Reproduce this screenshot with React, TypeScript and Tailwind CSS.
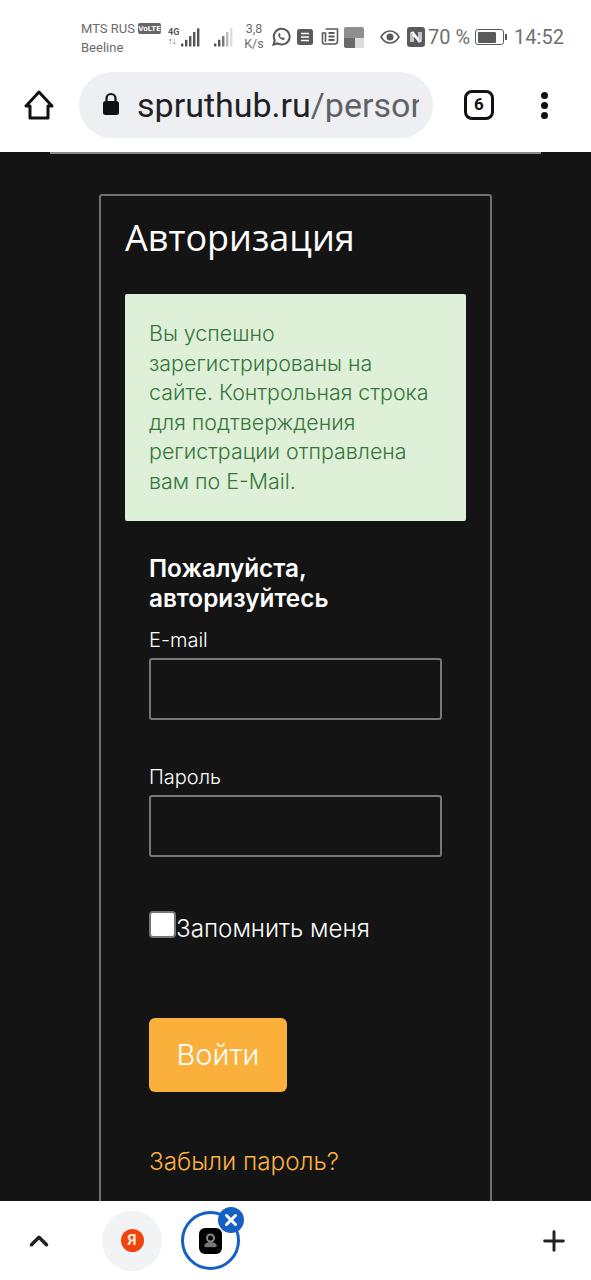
import { ChevronUp, Plus, X } from 'lucide-react';

const roboto = { fontFamily: 'Roboto, sans-serif' };

const SignalBars = ({ levels }: { levels: string[] }) => (
    <svg width="22" height="20" viewBox="0 0 22 20">
        {levels.map((color, i) => {
            const h = 3 + i * 3.8;
            return <rect key={i} x={i * 4 + 1} y={19.500 - h} width="2.400" height={h} rx="0.500" fill={color} />;
        })}
    </svg>
);

const StatusBar = () => (
    <div className="h-[72px] pl-[81px] pr-[28px] pt-[20px] flex items-start text-[#6b6b6b] font-['Roboto',sans-serif]">
        <div className="w-[87px] shrink-0 text-[13px] leading-[19px] -mt-[1px]">
            <div className="flex items-center whitespace-nowrap">
                MTS RUS
                <span className="ml-[3px] h-[11px] w-[23px] rounded-[2px] bg-[#666] text-white text-[8px] font-bold leading-[11px] text-center">
                    VoLTE
                </span>
            </div>
            <div>Beeline</div>
        </div>
        <div className="flex items-center h-[30px] mt-[2px]">
            <div className="w-[12px] text-[9px] font-bold leading-[9px] text-[#555]">
                <div>4G</div>
                <div className="tracking-tighter">↑↓</div>
            </div>
            <SignalBars levels={['#555', '#555', '#555', '#555', '#555']} />
            <div className="ml-[11px]">
                <SignalBars levels={['#555', '#555', '#777', '#bbb', '#ddd']} />
            </div>
        </div>
        <div className="ml-[8px] w-[22px] text-center text-[12.500px] leading-[15px] mt-[1px] shrink-0">
            <div>3,8</div>
            <div>K/s</div>
        </div>
        <div className="ml-[6px] flex items-center h-[30px] mt-[2px]">
            <svg width="20" height="20" viewBox="0 0 24 24" fill="none" stroke="#5a5a5a" strokeWidth="2.400">
                <path d="M3 21l1.500-5A9.500 9.500 0 1 1 8 19.700L3 21z" />
                <path d="M8.500 8.500c0 4 3 7 7 7l1.200-2-2.400-1.200-1 1c-1.200-.5-2.200-1.500-2.700-2.700l1-1L10.500 7.300z" fill="#5a5a5a" stroke="none" />
            </svg>
            <svg width="16" height="16" viewBox="0 0 16 16" className="ml-[6px]">
                <rect width="16" height="16" rx="2.500" fill="#5a5a5a" />
                <path d="M4 4.500h8M4 8h8M4 11.500h8" stroke="#fff" strokeWidth="1.300" />
            </svg>
            <svg width="18" height="18" viewBox="0 0 17 18" className="ml-[8px]" fill="none" stroke="#5a5a5a" strokeWidth="1.600">
                <path d="M4 1h12v12a3 3 0 0 1-3 3H3a2 2 0 0 1-2-2V5h3v9" />
                <path d="M7 5h6M7 8.500h6M7 12h6" strokeWidth="1.800" />
            </svg>
            <div className="ml-[5px] w-[20px] h-[21px] grid grid-cols-[11px_9px] grid-rows-[11px_10px] rounded-[2px] overflow-hidden">
                <div className="col-span-2 bg-[#8f8f8f]" />
                <div className="bg-[#6a6a6a]" />
                <div className="bg-[#dcdcdc]" />
            </div>
        </div>
        <div className="ml-[16px] flex items-center h-[30px] mt-[2px]">
            <svg width="20" height="14" viewBox="0 0 20 14" fill="none">
                <path d="M1 7c2.200-3.800 5.400-6 9-6s6.800 2.200 9 6c-2.200 3.800-5.400 6-9 6S3.200 10.800 1 7z" stroke="#5a5a5a" strokeWidth="1.600" />
                <circle cx="10" cy="7" r="3.500" fill="#5a5a5a" />
            </svg>
            <svg width="18" height="20" viewBox="0 0 18 20" className="ml-[7px]">
                <rect width="18" height="20" rx="3" fill="#5a5a5a" />
                <path d="M4 15V6l2-1 6 8V5M14 5v9l-2 1-6-8v8" stroke="#fff" strokeWidth="1.300" fill="none" />
            </svg>
            <span className="ml-[3px] text-[20px] leading-none whitespace-nowrap text-[#707070]">70 %</span>
            <div className="ml-[5px] flex items-center shrink-0">
                <div className="w-[29px] h-[16px] rounded-[3px] border-[1.500px] border-[#5a5a5a] p-[1.500px]">
                    <div className="h-full w-[18px] bg-[#5a5a5a] rounded-[1px]" />
                </div>
                <div className="w-[2px] h-[6px] ml-[1px] bg-[#5a5a5a]" />
            </div>
            <span className="ml-[7px] text-[20px] leading-none whitespace-nowrap text-[#707070]">14:52</span>
        </div>
    </div>
);

const Toolbar = () => (
    <div className="h-[80px] flex items-start pl-[24px] text-[#202124]">
        <svg width="30" height="32" viewBox="0 0 30 32" fill="none" className="mt-[17px] shrink-0" stroke="#111" strokeWidth="3" strokeLinejoin="round">
            <path d="M15 3L2 17h4v12h18V17h4z" />
        </svg>
        <div className="ml-[25px] w-[354px] h-[66px] rounded-full bg-[#edeff2] flex items-center pl-[23px] overflow-hidden shrink-0">
            <svg width="18" height="24" viewBox="0 0 18 24" className="shrink-0 -mt-[3px]">
                <path d="M4.500 10V6.500a4.500 4.500 0 0 1 9 0V10" stroke="#111" strokeWidth="2.200" fill="none" />
                <rect x="1" y="9" width="16" height="14" rx="2.500" fill="#111" />
            </svg>
            <div className="ml-[17px] w-[282px] overflow-hidden whitespace-nowrap text-[34px] leading-none font-['Roboto',sans-serif]">
                <span className="text-[#202124]">spruthub.ru</span>
                <span className="text-[#5f6368]">/personal/</span>
            </div>
        </div>
        <div className="ml-[31px] mt-[18px] w-[30px] h-[30px] rounded-[8px] border-[3px] border-[#111] flex items-center justify-center text-[17px] font-bold shrink-0 text-[#111]" style={roboto}>
            6
        </div>
        <div className="ml-[47px] mt-[20px] flex flex-col gap-[3px] shrink-0">
            <div className="w-[7px] h-[7px] rounded-full bg-[#111]" />
            <div className="w-[7px] h-[7px] rounded-full bg-[#111]" />
            <div className="w-[7px] h-[7px] rounded-full bg-[#111]" />
        </div>
    </div>
);

const LoginCard = () => (
    <div className="mx-[99px] mt-[40px] border-2 border-b-0 border-[#707070] rounded-t-[3px] pt-[18px] px-[24px] pb-[60px] font-['Inter',sans-serif]">
        <h1 className="text-[36px] leading-[48px] font-normal text-white font-['Open_Sans',sans-serif]">Авторизация</h1>
        <div className="mt-[32px] h-[227px] bg-[#dff0d8] rounded-[2px] pl-[24px] pr-[32px] pt-[25px] text-[21.400px] leading-[29.500px] font-light text-[#35763a]">
            Вы успешно зарегистрированы на сайте. Контрольная строка для подтверждения регистрации отправлена вам по E-Mail.
        </div>
        <form className="mt-[33px] px-[24px] text-white font-light">
            <div className="text-[24.300px] leading-[29.500px] font-semibold">Пожалуйста, авторизуйтесь</div>
            <label className="block mt-[13px] text-[20px] leading-[29px]">E-mail</label>
            <input className="mt-[3px] block w-full h-[62px] bg-transparent border-2 border-[#777] rounded-[3px]" />
            <label className="block mt-[43px] text-[20px] leading-[29px]">Пароль</label>
            <input type="password" className="mt-[3px] block w-full h-[62px] bg-transparent border-2 border-[#777] rounded-[3px]" />
            <div className="mt-[54px] flex items-start">
                <div className="w-[27px] h-[27px] bg-white rounded-[4px] border-2 border-[#767676] shrink-0" />
                <span className="mt-[3px] text-[24.200px] leading-[30px]">Запомнить меня</span>
            </div>
            <button type="button" className="mt-[74px] block w-[138px] h-[74px] rounded-[6px] bg-[#fbb03b] text-[29px] font-light text-white">
                Войти
            </button>
            <div className="mt-[54px] text-[24.300px] leading-[30px] text-[#fbb040]">Забыли пароль?</div>
        </form>
    </div>
);

const BottomBar = () => (
    <div className="h-[79px] bg-white flex items-center shrink-0 relative">
        <ChevronUp className="ml-[24px] shrink-0 text-[#202124]" size={30} strokeWidth={2.800} />
        <div className="ml-[48px] w-[60px] h-[60px] rounded-full bg-[#f1f3f4] flex items-center justify-center shrink-0">
            <div className="w-[23px] h-[23px] rounded-full bg-[#f0440f] text-[#ffe9d8] text-[15px] font-bold leading-[23px] text-center" style={roboto}>
                Я
            </div>
        </div>
        <div className="ml-[19px] relative w-[59px] h-[59px] rounded-full border-[3px] border-[#1560c4] flex items-center justify-center shrink-0">
            <div className="w-[23px] h-[26px] rounded-[6px] bg-black flex items-center justify-center">
                <svg width="17" height="18" viewBox="0 0 17 18">
                    <circle cx="8.500" cy="6" r="3.500" fill="none" stroke="#888" strokeWidth="2" />
                    <path d="M2 14c1-3 3-4 6.500-4s5.500 1 6.500 4c-2 2-4 1-6.500 1S4 16 2 14z" fill="#777" />
                </svg>
            </div>
            <div className="absolute -top-[7px] -right-[7px] w-[26px] h-[26px] rounded-full bg-[#1560c4] flex items-center justify-center">
                <X className="text-white" size={18} strokeWidth={4} />
            </div>
        </div>
        <Plus className="ml-auto mr-[21px] text-[#202124]" size={32} strokeWidth={2.200} />
    </div>
);

export default function App() {
    return (
        <div className="h-[1280px] w-[591px] flex flex-col overflow-hidden bg-white">
            <div className="shrink-0">
                <StatusBar />
                <Toolbar />
            </div>
            <main className="flex-1 min-h-0 overflow-hidden bg-[#141414]">
                <div className="mx-[50px] h-[2px] bg-[#8a8a8a]" />
                <LoginCard />
            </main>
            <BottomBar />
        </div>
    );
}
